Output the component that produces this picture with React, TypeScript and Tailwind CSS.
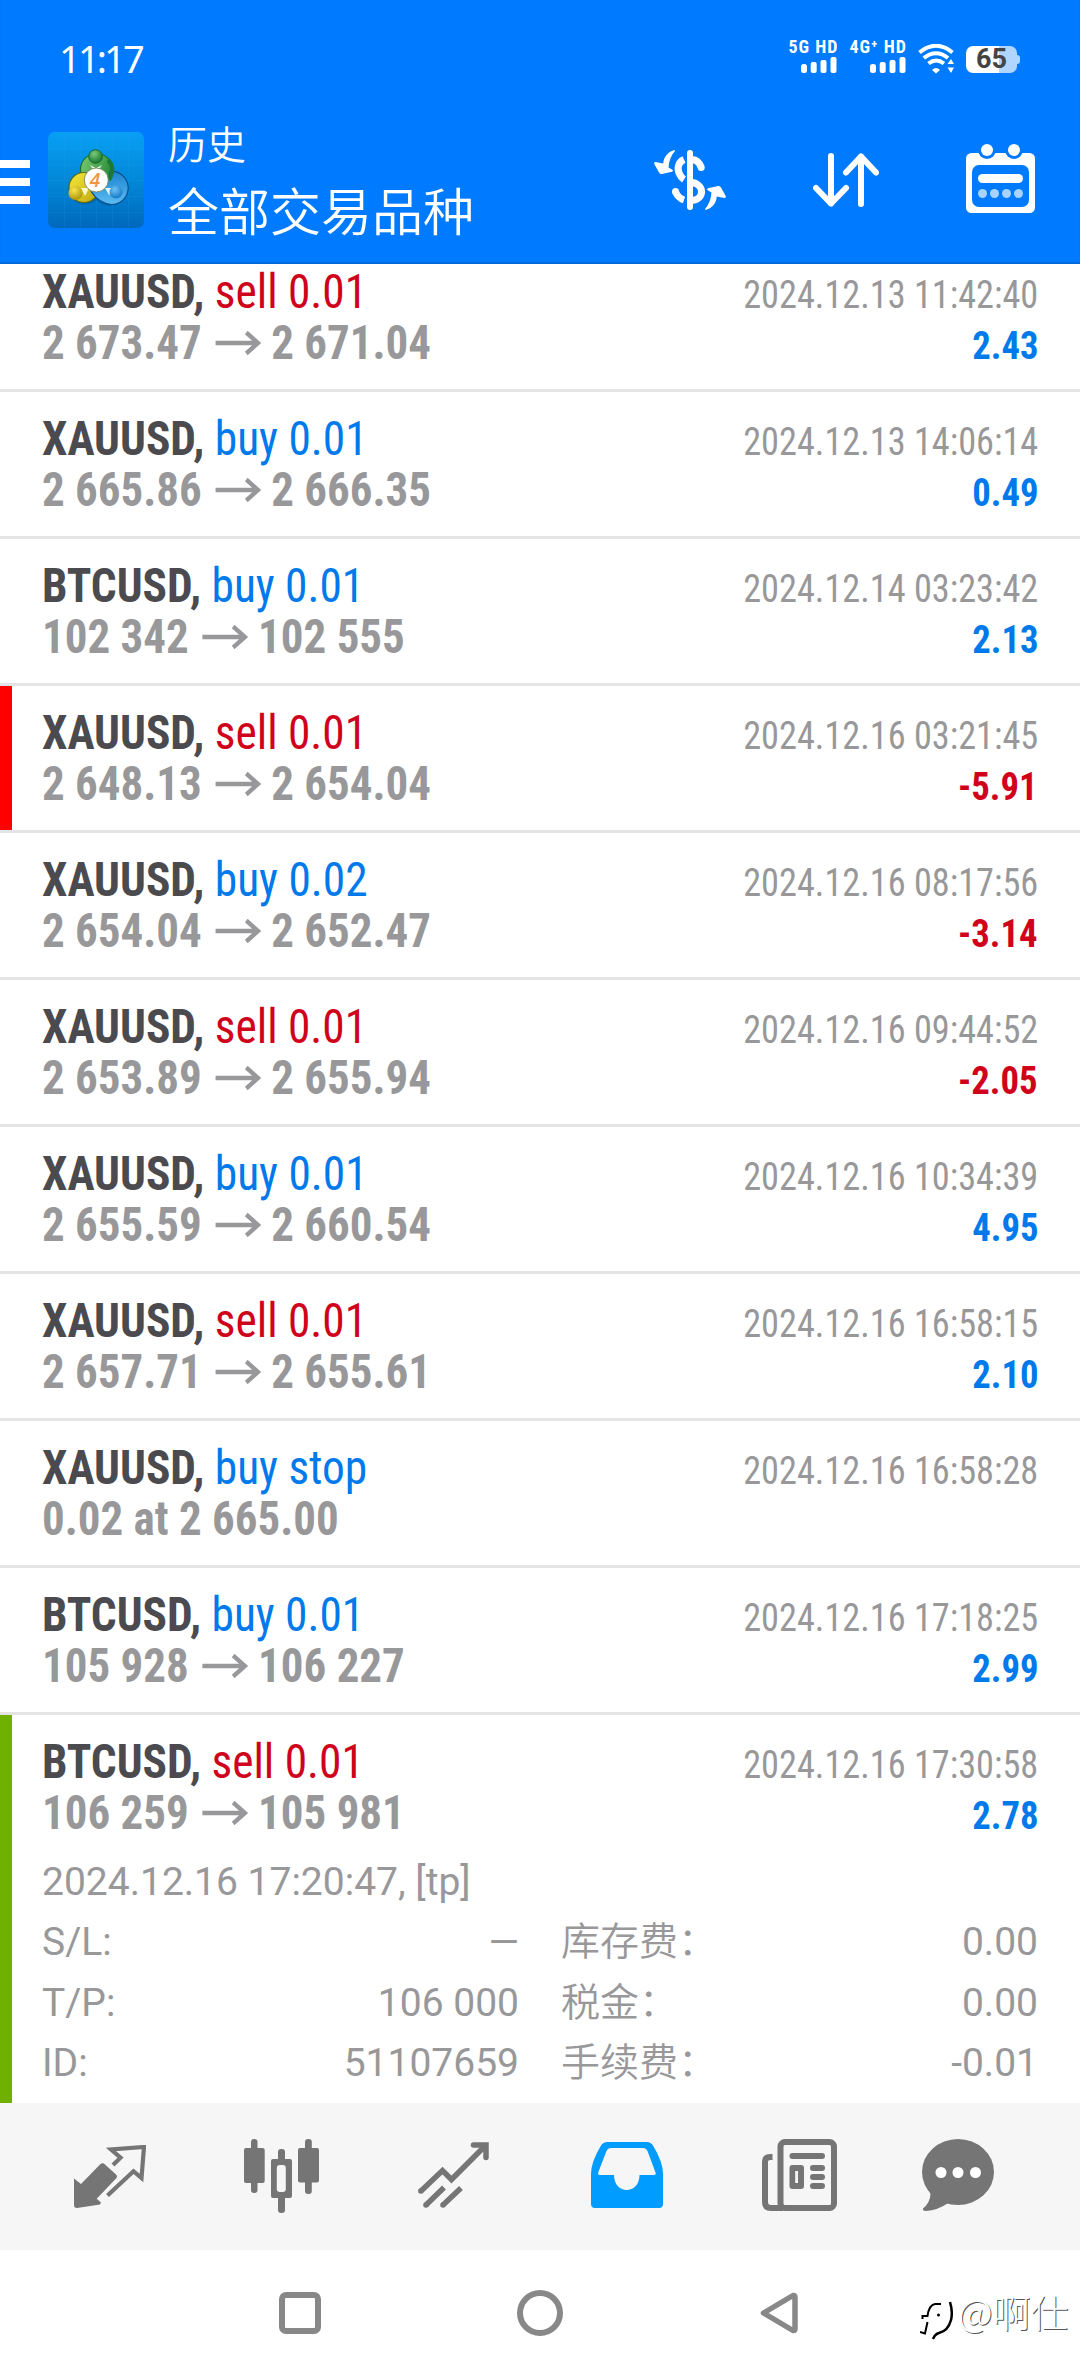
import type { ReactNode } from 'react';

type Deal = {
  symbol: string;
  side: 'buy' | 'sell';
  volume: string;
  from?: string;
  to?: string;
  note?: string;
  time: string;
  profit?: string;
  mark?: 'red' | 'green';
};

const deals: Deal[] = [
  { symbol: 'XAUUSD', side: 'sell', volume: '0.01', from: '2 673.47', to: '2 671.04', time: '2024.12.13 11:42:40', profit: '2.43' },
  { symbol: 'XAUUSD', side: 'buy', volume: '0.01', from: '2 665.86', to: '2 666.35', time: '2024.12.13 14:06:14', profit: '0.49' },
  { symbol: 'BTCUSD', side: 'buy', volume: '0.01', from: '102 342', to: '102 555', time: '2024.12.14 03:23:42', profit: '2.13' },
  { symbol: 'XAUUSD', side: 'sell', volume: '0.01', from: '2 648.13', to: '2 654.04', time: '2024.12.16 03:21:45', profit: '-5.91', mark: 'red' },
  { symbol: 'XAUUSD', side: 'buy', volume: '0.02', from: '2 654.04', to: '2 652.47', time: '2024.12.16 08:17:56', profit: '-3.14' },
  { symbol: 'XAUUSD', side: 'sell', volume: '0.01', from: '2 653.89', to: '2 655.94', time: '2024.12.16 09:44:52', profit: '-2.05' },
  { symbol: 'XAUUSD', side: 'buy', volume: '0.01', from: '2 655.59', to: '2 660.54', time: '2024.12.16 10:34:39', profit: '4.95' },
  { symbol: 'XAUUSD', side: 'sell', volume: '0.01', from: '2 657.71', to: '2 655.61', time: '2024.12.16 16:58:15', profit: '2.10' },
  { symbol: 'XAUUSD', side: 'buy', volume: 'stop', note: '0.02 at 2 665.00', time: '2024.12.16 16:58:28' },
  { symbol: 'BTCUSD', side: 'buy', volume: '0.01', from: '105 928', to: '106 227', time: '2024.12.16 17:18:25', profit: '2.99' },
  { symbol: 'BTCUSD', side: 'sell', volume: '0.01', from: '106 259', to: '105 981', time: '2024.12.16 17:30:58', profit: '2.78', mark: 'green' },
];

const details = [
  ['S/L:', '—', '库存费：', '0.00'],
  ['T/P:', '106 000', '税金：', '0.00'],
  ['ID:', '51107659', '手续费：', '-0.01'],
];

function Signal({ label }: { label: string }) {
  return (
    <div className="flex flex-col items-end">
      <span className="-mr-px text-[18px] leading-[18px] font-bold whitespace-nowrap tracking-[1px] font-['Roboto',sans-serif] [font-stretch:75%]">{label}</span>
      <svg className="mt-px" width="36" height="16" viewBox="0 0 36 16" fill="currentColor">
        <rect x="0" y="7" width="6" height="9" rx="2.5" />
        <rect x="9.7" y="5" width="6" height="11" rx="2" />
        <rect x="19.5" y="3" width="6" height="13" rx="2" />
        <rect x="29.5" y="0" width="6" height="16" rx="2" />
      </svg>
    </div>
  );
}

function StatusBar() {
  return (
    <div className="flex h-[120px] items-start pl-[59px] pr-[60px] pt-[38px]">
      <span className="text-[38px] leading-[40px] tracking-[-0.075em] font-['Noto_Sans',sans-serif]">11:17</span>
      <div className="ml-auto flex items-start">
        <Signal label="5G HD" />
        <div className="ml-3">
          <Signal label="4G⁺ HD" />
        </div>
        <svg className="ml-3 mt-1.5" width="36" height="30" viewBox="0 0 36 30" fill="none" stroke="currentColor">
          <path d="M1.500 8.500Q18 -5 34.500 8.500" strokeWidth="4" />
          <path d="M5.800 14Q18 4.500 30 14" strokeWidth="4" />
          <path d="M10.500 19.500Q18 13.500 26 19.500" strokeWidth="4" />
          <path d="M14 26Q18 22 22 26L18 29.500Z" fill="currentColor" stroke="none" />
          <path d="M29.500 20L33 15L36 20ZM29.500 23.500H36L33 29Z" fill="currentColor" stroke="none" />
        </svg>
        <div className="ml-3 mt-2 flex items-center">
          <div className="flex h-[27px] w-[51px] items-center justify-center rounded-[7px] bg-linear-to-r from-white from-65% to-[#b0d6ff] to-65% text-[27px] leading-[27px] font-bold text-[#444] font-['Roboto',sans-serif]">
            65
          </div>
          <div className="h-[9px] w-[3px] rounded-r-sm bg-[#b0d6ff]" />
        </div>
      </div>
    </div>
  );
}

function AppLogo() {
  return (
    <svg width="96" height="96" viewBox="0 0 96 96">
      <defs>
        <linearGradient id="tile" x1="0.5" y1="0" x2="0.5" y2="1">
          <stop offset="0" stopColor="#08a0f4" />
          <stop offset="0.5" stopColor="#0288d8" />
          <stop offset="1" stopColor="#0068bc" />
        </linearGradient>
        <linearGradient id="greenBody" x1="0" y1="0" x2="1" y2="0.4">
          <stop offset="0" stopColor="#7ccb74" />
          <stop offset="1" stopColor="#2d8f3c" />
        </linearGradient>
        <linearGradient id="yellowBody" x1="0" y1="0" x2="1" y2="1">
          <stop offset="0" stopColor="#f6ea3c" />
          <stop offset="1" stopColor="#bfa50f" />
        </linearGradient>
        <linearGradient id="blueBody" x1="0" y1="0" x2="0" y2="1">
          <stop offset="0" stopColor="#1b83d0" />
          <stop offset="1" stopColor="#5cbcf2" />
        </linearGradient>
        <radialGradient id="green" cx="0.4" cy="0.3" r="0.8">
          <stop offset="0" stopColor="#7ac97a" />
          <stop offset="1" stopColor="#0c6a25" />
        </radialGradient>
        <radialGradient id="yellow" cx="0.4" cy="0.3" r="0.8">
          <stop offset="0" stopColor="#f7e84e" />
          <stop offset="1" stopColor="#a58a00" />
        </radialGradient>
        <radialGradient id="blue" cx="0.4" cy="0.3" r="0.8">
          <stop offset="0" stopColor="#6cc4f5" />
          <stop offset="1" stopColor="#0a6fbf" />
        </radialGradient>
      </defs>
      <rect width="96" height="96" rx="7" fill="url(#tile)" />
      <path d="M16.500 0V96M32.500 0V96M48.500 0V96M64.500 0V96M80.500 0V96M0 16.500H96M0 32.500H96M0 48.500H96M0 64.500H96M0 80.500H96" stroke="#3bb0f2" strokeOpacity="0.12" />
      {/* Three figures around the badge */}
      <circle cx="37" cy="56" r="16.500" fill="#064a80" opacity="0.35" />
      <circle cx="61" cy="56" r="17.500" fill="#064a80" opacity="0.35" />
      <circle cx="48.500" cy="37.500" r="16" fill="url(#greenBody)" stroke="#1b6f33" strokeWidth="1.200" />
      <path d="M42 33L48 36L54 33L50 39H46Z" fill="#dff2dc" />
      <circle cx="36" cy="55.500" r="15" fill="url(#yellowBody)" stroke="#5e6a14" strokeWidth="1.200" />
      <path d="M33 56H41L37 64Z" fill="#fbf8c8" />
      <path d="M62 39.500A16.500 16.500 0 1 1 57 71Q46 67 41 55Q52 61 59 50Q62 45 62 39.500Z" fill="url(#blueBody)" stroke="#0a4f8c" strokeWidth="1.200" />
      <path d="M57 56H67L61 63Z" fill="#e4f5ff" />
      <path d="M60 28Q68 36 61 48" fill="none" stroke="#1c7a34" strokeWidth="4" />
      <circle cx="47.500" cy="24.500" r="6.800" fill="url(#green)" stroke="#176b2b" />
      <circle cx="27.500" cy="61" r="7" fill="url(#yellow)" />
      <circle cx="68" cy="60" r="6.500" fill="url(#blue)" />
      <circle cx="48.300" cy="48" r="12" fill="#fff" stroke="#6b7a4a" strokeWidth="0.800" />
      <text x="47" y="55" textAnchor="middle" fontSize="19" fontWeight="600" fontStyle="italic" fontFamily="Open Sans, sans-serif" fill="#f3943f">
        4
      </text>
    </svg>
  );
}

function CurrencyIcon() {
  const arrow = 'M20.700 0C14 1.500 9.500 7 9.300 13.500L1.500 12Q-0.300 12 0.300 14L5 22.500Q6 24.300 8 24L18 21.700Q20 21 18 19.600L14.500 17.500C15 11 17 5.500 21 1Z';
  return (
    <svg width="72" height="60" viewBox="0 0 72 60" fill="none" stroke="currentColor" strokeWidth="7">
      <rect x="33" y="0" width="6" height="60" rx="3" fill="currentColor" stroke="none" />
      <path d="M30 9.500C23.500 12.500 23 19 25.500 24Q27 27.500 30 29.500" />
      <path d="M38 9.500Q44.500 10 47 17" />
      <path d="M38 32.500C51 34.500 50.500 49.500 38 50.500" />
      <path d="M30 50Q24 48 21.500 41.800" />
      <g fill="currentColor" stroke="none">
        <circle cx="47.200" cy="17.500" r="3.500" />
        <circle cx="21.500" cy="41.500" r="3.500" />
        <path d={arrow} />
        <path d={arrow} transform="rotate(180 36 30)" />
      </g>
    </svg>
  );
}

function SortIcon() {
  return (
    <svg width="66" height="54" viewBox="0 0 66 54" fill="none" stroke="currentColor" strokeWidth="6" strokeLinecap="round" strokeLinejoin="round">
      <path d="M18 3V50.500M3 35L18 50.500L33 35" />
      <path d="M48 51V3.500M33 19.500L48 3.500L63 19.500" />
    </svg>
  );
}

function CalendarIcon() {
  return (
    <svg width="69" height="69" viewBox="0 0 69 69" fill="currentColor">
      <rect x="0" y="9" width="69" height="60" rx="5.500" />
      <circle cx="21" cy="6" r="9" fill="#007aff" />
      <circle cx="48" cy="6" r="9" fill="#007aff" />
      <circle cx="21" cy="6" r="6" />
      <circle cx="48" cy="6" r="6" />
      <rect x="6" y="21" width="57" height="42" rx="7" fill="#007aff" />
      <rect x="12" y="30" width="45" height="9" rx="4.500" />
      <g fill="#a9d3ff">
        <circle cx="16.500" cy="49.500" r="4.500" />
        <circle cx="28.500" cy="49.500" r="4.500" />
        <circle cx="40.500" cy="49.500" r="4.500" />
        <circle cx="52.500" cy="49.500" r="4.500" />
      </g>
    </svg>
  );
}

function Header() {
  return (
    <header className="relative z-10 h-[264px] bg-[#007aff] text-white shadow-[inset_0_-2px_1px_#0068d8]">
      <StatusBar />
      <div className="flex items-start">
        {/* Menu */}
        <div className="mt-10 flex w-[30px] flex-col gap-2.5">
          <div className="h-2 bg-white" />
          <div className="h-2 bg-white" />
          <div className="h-2 bg-white" />
        </div>
        <div className="ml-[18px] mt-3">
          <AppLogo />
        </div>
        <div className="-mt-[3px] ml-6 flex flex-col font-['Noto_Sans_CJK_SC',sans-serif] font-[350]">
          <span className="text-[39px] leading-[50px]">历史</span>
          <span className="mt-[9px] text-[51px] leading-[66px]">全部交易品种</span>
        </div>
        {/* Actions */}
        <div className="ml-auto mr-[45px] mt-6 flex items-start">
          <div className="mt-1.5">
            <CurrencyIcon />
          </div>
          <div className="ml-[87px] mt-[9px]">
            <SortIcon />
          </div>
          <div className="ml-[87px]">
            <CalendarIcon />
          </div>
        </div>
      </div>
    </header>
  );
}

function PriceArrow() {
  return (
    <svg className="mb-1.5 ml-[14px] mr-[11px] inline-block" width="49" height="24" viewBox="0 0 49 24" fill="none" stroke="currentColor" strokeWidth="4.500">
      <path d="M0 12H46M33 1.500L45.500 12L33 22.500" />
    </svg>
  );
}

function DealRow({ deal, children }: { deal: Deal; children?: ReactNode }) {
  const sideColor = deal.side === 'buy' ? 'text-[#007aeb]' : 'text-[#d0021b]';
  const profitColor = deal.profit?.startsWith('-') ? 'text-[#d0021b]' : 'text-[#007aeb]';
  const border = deal.mark === 'red' ? 'border-l-[#fe0000]' : deal.mark === 'green' ? 'border-l-[#6fb000]' : 'border-l-transparent';

  return (
    <div className={`border-l-12 ${border} pl-[30px] pr-[42px] pt-[21px] ${children ? 'h-[388px]' : 'h-36'}`}>
      <div className="flex h-[51px] items-baseline justify-between font-['Roboto',sans-serif] [font-stretch:75%]">
        <span className="origin-left scale-x-[0.945] text-[48px] leading-[51px]">
          <b className="text-[#4a4a4f]">{deal.symbol},</b>{' '}
          <span className={sideColor}>
            {deal.side} {deal.volume}
          </span>
        </span>
        <span className="origin-right scale-x-[0.93] text-[39px] leading-[51px] text-[#98989a]">{deal.time}</span>
      </div>
      <div className="flex h-[51px] items-baseline justify-between font-bold font-['Roboto',sans-serif] [font-stretch:75%]">
        <span className="origin-left scale-x-[0.937] text-[48px] leading-[51px] text-[#98989a]">
          {deal.note ?? (
            <>
              {deal.from}
              <PriceArrow />
              {deal.to}
            </>
          )}
        </span>
        <span className={`origin-right scale-x-[0.94] text-[39px] leading-[51px] ${profitColor}`}>{deal.profit}</span>
      </div>
      {children}
    </div>
  );
}

function DealDetails() {
  return (
    <div className="pt-[14px] text-[39px] leading-[60px] text-[#98989a] font-['Roboto','Noto_Sans_CJK_SC',sans-serif]">
      <div>2024.12.16 17:20:47, [tp]</div>
      {details.map(([label, value, label2, value2]) => (
        <div key={label} className="grid h-[60.5px] grid-cols-2 gap-[42px]">
          <div className="flex justify-between">
            <span>{label}</span>
            <span>{value}</span>
          </div>
          <div className="flex justify-between">
            <span className="font-[350]">{label2}</span>
            <span>{value2}</span>
          </div>
        </div>
      ))}
    </div>
  );
}

function TabBar() {
  return (
    <nav className="flex h-[147px] items-start bg-[#f6f6f6] pl-[74px] pt-9 text-[#757575]">
      {/* Quotes */}
      <svg className="mt-1.5" width="72" height="63" viewBox="0 0 72 63" fill="none">
        <path d="M0 33.500L7 39L26 19.500Q28.500 17 31 19.500L42 29.500Q44 31.500 42 33.500L22.700 53.700L27 57.500L26 59.500L3 63Q0 63 0 60Z" fill="currentColor" />
        <path d="M39 20L46.500 12.700L37 4.500L70 2L67.500 33L59.500 26.200L33.500 50.500" stroke="currentColor" strokeWidth="4.200" />
      </svg>
      {/* Charts */}
      <svg className="ml-[98px]" width="75" height="74" viewBox="0 0 75 74" fill="currentColor">
        <rect x="7" y="0" width="6.500" height="54" rx="3" />
        <rect x="0" y="9" width="20.700" height="35" rx="2" />
        <rect x="34" y="10" width="7" height="64" rx="3" />
        <rect x="27" y="20" width="21" height="39" rx="2" />
        <rect x="32.800" y="26" width="9" height="27" rx="3" fill="#f6f6f6" />
        <rect x="61" y="0" width="6.800" height="55" rx="3" />
        <rect x="54" y="9" width="21" height="34.500" rx="2" />
      </svg>
      {/* Trade */}
      <svg className="ml-[99px] mt-[3px]" width="71" height="66" viewBox="0 0 71 66" fill="none" stroke="currentColor" strokeWidth="5.500">
        <path d="M2.500 49.500L24.500 28.500L33.500 37.500L66 5" />
        <path d="M55.500 3H68V15.500" strokeLinecap="round" />
        <path d="M8 63L26 45.500M25 63L43 46" />
        <g fill="currentColor" stroke="none">
          <circle cx="2.800" cy="49" r="2.700" />
          <circle cx="8" cy="63" r="2.800" />
          <circle cx="25" cy="63" r="2.800" />
        </g>
      </svg>
      {/* History */}
      <svg className="ml-[102px] mt-[3px] text-[#009cff]" width="72" height="66" viewBox="0 0 72 66" fill="currentColor">
        <path fillRule="evenodd" d="M16.500 0H55.500Q60 0 62 3.500Q72 20 72 32V62Q72 66 68 66H4Q0 66 0 62V32Q0 20 10 3.500Q12 0 16.500 0ZM20 6Q17 6 15.500 9L7.200 30.500Q6.500 33 9 33H23C23 53 48.500 53 48.500 33H62.500Q65.500 33 64.500 30.500L56.500 9Q55 6 52 6Z" />
      </svg>
      {/* News */}
      <svg className="ml-[99px]" width="75" height="72" viewBox="0 0 75 72" fill="none">
        <rect x="18.500" y="3" width="53.500" height="66" rx="4.500" stroke="currentColor" strokeWidth="6" />
        <path d="M10.500 18H8Q3 18 3 22.500V63Q3 69 9 69H21" stroke="currentColor" strokeWidth="6" />
        <g fill="currentColor">
          <rect x="27.500" y="14" width="35.500" height="6" rx="3" />
          <rect x="27.500" y="26" width="14.500" height="24" rx="3" />
          <rect x="48" y="26" width="15" height="6" rx="3" />
          <rect x="48" y="35" width="15" height="6" rx="3" />
          <rect x="48" y="44" width="15" height="6" rx="3" />
        </g>
        <rect x="33.200" y="32" width="2.800" height="12" fill="#f6f6f6" />
      </svg>
      {/* Messages */}
      <svg className="ml-[85px]" width="72" height="72" viewBox="0 0 72 72" fill="currentColor">
        <ellipse cx="36" cy="33" rx="36" ry="33" />
        <path d="M6 50L8.500 55Q8 64 1 69.500Q0.500 72 4 72Q16 71 25.500 64.500L36 62Z" />
        <g fill="#fff">
          <circle cx="19" cy="33.500" r="5.500" />
          <circle cx="36" cy="33.500" r="5.500" />
          <circle cx="53.500" cy="33.500" r="5.500" />
        </g>
      </svg>
    </nav>
  );
}

function SystemNav() {
  return (
    <div className="flex h-[126px] items-start bg-white pl-[279px] pt-10 text-[#888]">
      <div className="mt-0.5 size-[42px] rounded-[7px] border-6 border-current" />
      <div className="ml-[196px] size-[46px] rounded-full border-6 border-current" />
      <svg className="ml-[197px] mt-0.5" width="38" height="42" viewBox="0 0 38 42" fill="none" stroke="currentColor" strokeWidth="5.500" strokeLinejoin="round">
        <path d="M3.500 21L33 3.500Q35 3 35 5V37Q35 39 33 38.500Z" />
      </svg>
      {/* Watermark */}
      <div className="ml-[122px] mt-2.5 flex items-start">
        <svg width="33" height="42" viewBox="0 0 33 42" fill="none" stroke="#000" strokeWidth="2">
          <path d="M2.500 19V16H7.500Q9 5 15 4H21" />
          <path d="M7.500 22L5 33.500L0 32" />
          <path d="M30 2Q33 12 31 20Q28 31 19 33Q15 34 13 39" strokeWidth="2.500" />
          <circle cx="18.500" cy="15" r="1.500" fill="#000" stroke="none" />
        </svg>
        <span className="ml-[5px] -mt-4 whitespace-nowrap text-[38px] leading-[54px] font-light text-white font-['Noto_Sans_CJK_SC',sans-serif] [text-shadow:1px_1px_0_#555]">@啊仕</span>
      </div>
    </div>
  );
}

export default function App() {
  return (
    <div className="h-[2376px] w-[1080px] overflow-hidden bg-white">
      <Header />
      <main className="-mt-[19px] divide-y-3 divide-[#e4e4e4]">
        {deals.map((deal, i) => (
          <div key={deal.time}>
            <DealRow deal={deal}>{i === deals.length - 1 && <DealDetails />}</DealRow>
          </div>
        ))}
      </main>
      <TabBar />
      <SystemNav />
    </div>
  );
}
